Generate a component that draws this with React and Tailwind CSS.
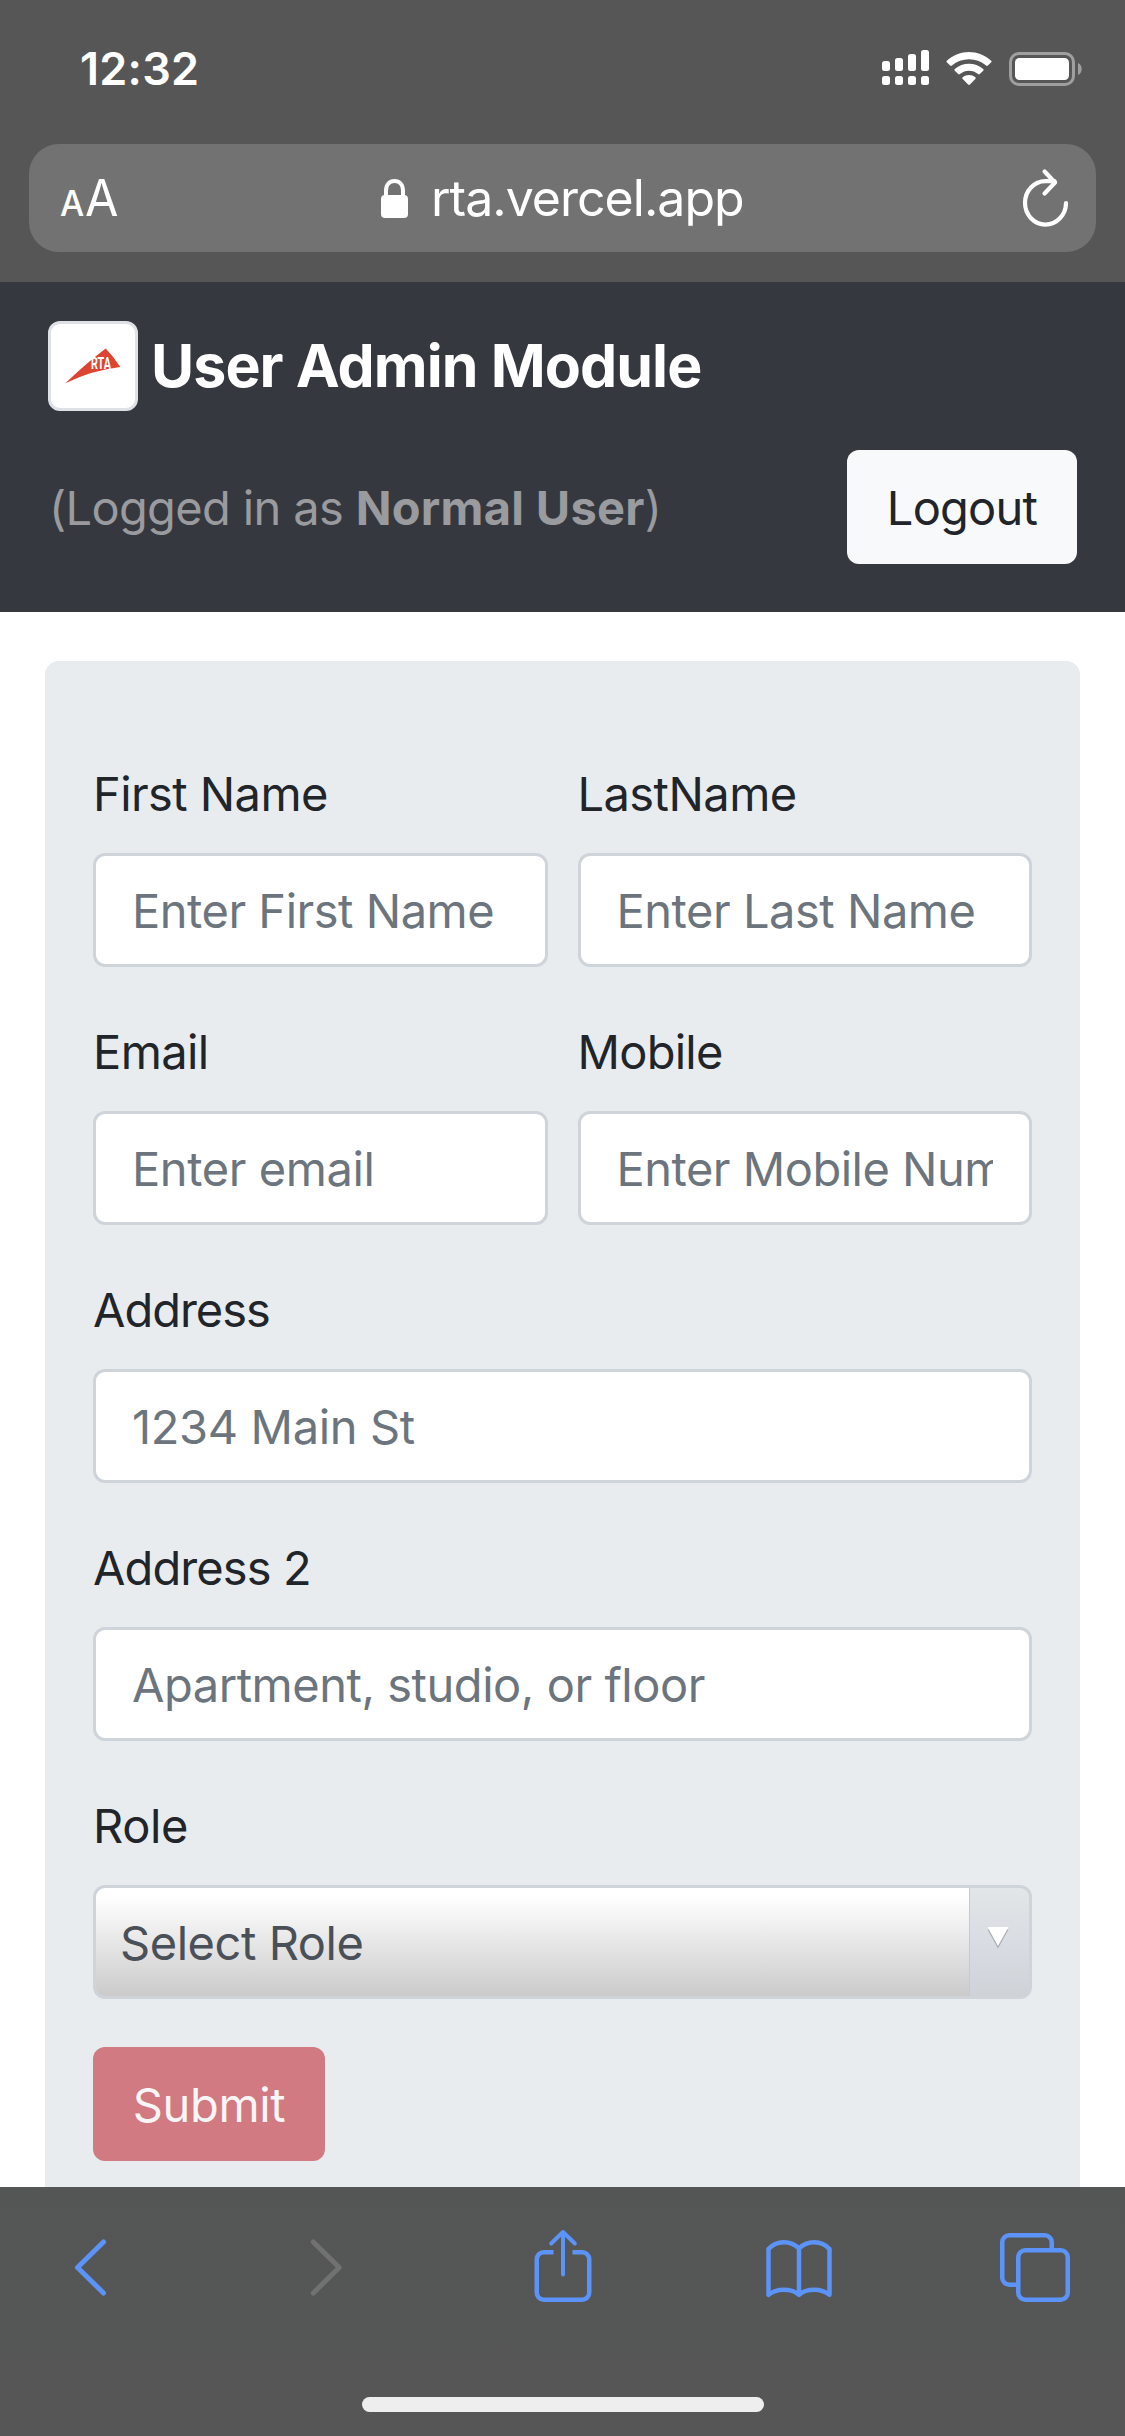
import React from "react";

function SignalIcon() {
  return (
    <svg width="48" height="36" viewBox="0 0 48 36" fill="white">
      <rect x="0" y="11" width="8" height="10" rx="2.5" />
      <rect x="13" y="8" width="8" height="13" rx="2.5" />
      <rect x="26" y="4" width="8" height="17" rx="2.5" />
      <rect x="39" y="0" width="8" height="21" rx="2.5" />
      <rect x="0" y="26" width="8" height="9" rx="2.5" />
      <rect x="13" y="26" width="8" height="9" rx="2.5" />
      <rect x="26" y="26" width="8" height="9" rx="2.5" />
      <rect x="39" y="26" width="8" height="9" rx="2.5" />
    </svg>
  );
}

function WifiIcon() {
  return (
    <svg width="46" height="34" viewBox="0 0 46 34" fill="white">
      <path d="M0.8 8.7C13.2-2.9 32.8-2.9 45.2 8.7c.6.6.6 1 0 1.6l-3.3 3.3c-.6.6-1.2.6-1.8 0-9.6-8.5-24.6-8.5-34.2 0-.6.6-1.2.6-1.8 0L.8 10.300c-.6-.6-.6-1 0-1.600z" />
      <path d="M8.800 17.100c8-7.300 20.400-7.300 28.400 0 .6.6.6 1 0 1.600l-3.400 3.400c-.6.6-1.100.5-1.700 0-5.200-4.500-13-4.500-18.200 0-.6.5-1.100.6-1.700 0l-3.400-3.400c-.6-.6-.6-1 0-1.600z" />
      <path d="M16.700 25.300c3.600-3.100 9-3.100 12.600 0 .6.5.6 1 0 1.600l-5.400 5.600c-.6.6-1.200.6-1.800 0l-5.400-5.600c-.6-.6-.6-1.100 0-1.600z" />
    </svg>
  );
}

function BatteryIcon() {
  return (
    <svg width="73" height="34" viewBox="0 0 73 34">
      <rect x="1.5" y="1.5" width="63" height="31" rx="8.5" fill="none" stroke="#9f9f9f" strokeWidth="3" />
      <rect x="6" y="6" width="54" height="22" rx="4.5" fill="white" />
      <path d="M69 11c5 2 5 10 0 12z" fill="#9f9f9f" />
    </svg>
  );
}

function LockIcon() {
  return (
    <svg width="27" height="39" viewBox="0 0 27 39">
      <path d="M5 18V11.5C5 5.5 8.5 2 13.5 2S22 5.5 22 11.5V18" fill="none" stroke="white" strokeWidth="4" />
      <rect x="0" y="16" width="27" height="23" rx="4" fill="white" />
    </svg>
  );
}

function ReloadIcon() {
  return (
    <svg width="48" height="58" viewBox="0 0 48 58" fill="none" stroke="white" strokeWidth="4.2" strokeLinecap="round" strokeLinejoin="round">
      <path d="M45 34A20.5 21.7 0 1 1 24.500 12.200H33.500" />
      <path d="M23.600 2.500L34 13.500L23.600 24.500" />
    </svg>
  );
}

function RtaLogo() {
  return (
    <svg width="84" height="84" viewBox="0 0 84 84">
      <path d="M14.300 59.300Q36 38.500 54.700 24.500Q63 33 69.300 43Q40 46.500 14.300 59.300z" fill="#dc4532" />
      <text x="40" y="45.300" textLength="20" lengthAdjust="spacingAndGlyphs" fill="white" fontFamily="Roboto, sans-serif" fontWeight="700" fontSize="16">
        RTA
      </text>
    </svg>
  );
}

function ToolbarIcon({ children, dim }) {
  return (
    <svg
      width="72"
      height="90"
      viewBox="0 0 72 90"
      fill="none"
      stroke={dim ? "#717171" : "#5b93f8"}
      strokeWidth="4.500"
      strokeLinecap="round"
      strokeLinejoin="round"
    >
      {children}
    </svg>
  );
}

function Label({ children, className }) {
  return <label className={"mb-6 block h-[72px] leading-[74px] text-[#212529] " + className}>{children}</label>;
}

function Field({ label, labelClass, placeholder, inputClass }) {
  return (
    <div className="min-w-0">
      <Label className={labelClass}>{label}</Label>
      <input
        placeholder={placeholder}
        className={
          "block h-[114px] w-full rounded-xl border-3 border-[#ced4d9] bg-white px-9 outline-none placeholder:text-[#6c757d] placeholder:opacity-100 " +
          inputClass
        }
      />
    </div>
  );
}

export default function App() {
  return (
    <div className="flex h-[2436px] w-[1125px] flex-col overflow-hidden bg-white font-['Inter','Liberation_Sans',sans-serif] text-[47px]">
      <div className="h-[282px] shrink-0 bg-[#565656]">
        <div className="flex h-[144px] items-start justify-between pr-[43px] pl-20 text-white">
          <span className="text-[45px] leading-[137px] font-semibold tracking-[0.24px]">12:32</span>
          <div className="mt-[50px] flex items-start">
            <SignalIcon />
            <div className="mt-[2px] ml-4">
              <WifiIcon />
            </div>
            <div className="mt-[2px] ml-[17px]">
              <BatteryIcon />
            </div>
          </div>
        </div>
        <div className="mx-[29px] flex h-[108px] items-center rounded-[30px] bg-[#727272] text-white">
          <div className="flex w-[352px] items-baseline pt-[5px] pl-[31px] leading-[108px]">
            <span className="inline-block w-[25px] origin-left scale-x-95 text-[36px] font-medium">A</span>
            <span className="inline-block origin-left scale-x-95 text-[51px]">A</span>
          </div>
          <LockIcon />
          <span className="ml-[23px] text-[50px] leading-[108px] tracking-[-0.99px]">rta.vercel.app</span>
          <div className="mr-[27px] ml-auto">
            <ReloadIcon />
          </div>
        </div>
      </div>

      <header className="h-[330px] shrink-0 bg-[#36383f] px-12 pt-[39px]">
        <div className="flex h-[90px] items-center">
          <div className="size-[90px] shrink-0 overflow-hidden rounded-xl border-3 border-[#dee2e6] bg-white">
            <RtaLogo />
          </div>
          <h1 className="ml-[13px] text-[59px] leading-[90px] font-bold tracking-[-0.92px] text-white">User Admin Module</h1>
        </div>
        <div className="mt-[39px] flex h-[114px] items-center justify-between">
          <p className="pl-px leading-none whitespace-nowrap text-[#999b9e]">
            <span className="tracking-[-0.65px]">(Logged in as </span>
            <strong className="font-bold tracking-[0.27px]">Normal User</strong>)
          </p>
          <button className="h-[114px] w-[230px] rounded-xl bg-[#f8f9fa] pt-[2px] tracking-[-0.77px] text-[#212529]">Logout</button>
        </div>
      </header>

      <main className="min-h-0 flex-1 overflow-hidden pt-[49px] pr-[45px] pl-[45px]">
        <form className="h-[1700px] rounded-[14px] bg-[#e8ecef] px-12 pt-24">
          <div className="grid grid-cols-2 gap-x-[30px] gap-y-12">
            <Field label="First Name" labelClass="tracking-[-0.58px]" placeholder="Enter First Name" inputClass="tracking-[-0.48px]" />
            <Field label="LastName" labelClass="tracking-[-0.55px]" placeholder="Enter Last Name" inputClass="tracking-[-0.47px]" />
            <Field label="Email" labelClass="tracking-[-0.6px]" placeholder="Enter email" inputClass="tracking-[-0.4px]" />
            <Field label="Mobile" labelClass="tracking-[-0.75px]" placeholder="Enter Mobile Number" inputClass="tracking-[-0.5px]" />
            <div className="col-span-2">
              <Field label="Address" labelClass="tracking-[-1.02px]" placeholder="1234 Main St" inputClass="tracking-[-0.36px]" />
            </div>
            <div className="col-span-2">
              <Field label="Address 2" labelClass="tracking-[-0.9px]" placeholder="Apartment, studio, or floor" inputClass="tracking-[-0.46px]" />
            </div>
            <div className="col-span-2">
              <Label className="tracking-[-0.37px]">Role</Label>
              <div className="flex h-[114px] overflow-hidden rounded-xl border-3 border-[#ced4d9] bg-[#ced4d9]">
                <div className="flex-1 bg-linear-to-b from-white from-8% to-[#cbcbcb] pl-[24px] leading-[110px] tracking-[-0.45px] text-[#495057]">
                  Select Role
                </div>
                <div className="flex w-[60px] justify-center border-l border-[#c6cacd] bg-linear-to-b from-[#e2e6e8] via-[#d9dde3] to-[#cfd3d8] pt-[39px] pr-[3px]">
                  <svg width="22" height="22" viewBox="0 0 22 22">
                    <path d="M0.500 2.500H21.500L11 21.500z" fill="#a9adb0" />
                    <path d="M0.500 0H21.500L11 19z" fill="white" />
                  </svg>
                </div>
              </div>
            </div>
          </div>
          <button className="mt-12 block h-[114px] w-[232px] rounded-xl bg-[#d17a81] pt-[2px] tracking-[-0.4px] text-[#faf5f6]">Submit</button>
        </form>
      </main>

      <nav className="flex h-[249px] shrink-0 flex-col items-center bg-[#565656] bg-linear-to-b from-[#545655] to-[#565656] pt-9">
        <div className="flex w-full justify-between px-[54px]">
          <ToolbarIcon>
            <path d="M49.500 19L23.500 44.500L49.500 70" strokeWidth="5" />
          </ToolbarIcon>
          <ToolbarIcon dim>
            <path d="M23.300 19L49.200 44.500L23.300 70" strokeWidth="5" />
          </ToolbarIcon>
          <ToolbarIcon>
            <path d="M26.500 29.250H16.750a7 7 0 0 0-7 7V69.750a7 7 0 0 0 7 7H55.250a7 7 0 0 0 7-7V36.250a7 7 0 0 0-7-7H45.500" strokeLinecap="butt" />
            <path d="M24.200 20.500L36 9L47.800 20.500M36 9V51.500" strokeWidth="4" />
          </ToolbarIcon>
          <ToolbarIcon>
            <path d="M5.500 71.800V26C10 20.800 16 19.200 20.700 19.200C27 19.200 32 21.200 36 25.500C40 21.200 45 19.200 51.300 19.200C56 19.200 62 20.800 66.500 26V71.800C62 68 56 66.700 51.300 66.700S40 68 36 71.800C32 68 26 66.700 20.700 66.700S10 68 5.500 71.800zM36 25.500V71.800" />
          </ToolbarIcon>
          <ToolbarIcon>
            <rect x="19.250" y="27.250" width="49.500" height="49.500" rx="7" />
            <path d="M17 61.750H10.250a7 7 0 0 1-7-7V19.250a7 7 0 0 1 7-7H45.750a7 7 0 0 1 7 7V25" strokeLinecap="butt" />
          </ToolbarIcon>
        </div>
        <div className="mt-[84px] h-[15px] w-[402px] rounded-full bg-[#eeeeee]" />
      </nav>
    </div>
  );
}
